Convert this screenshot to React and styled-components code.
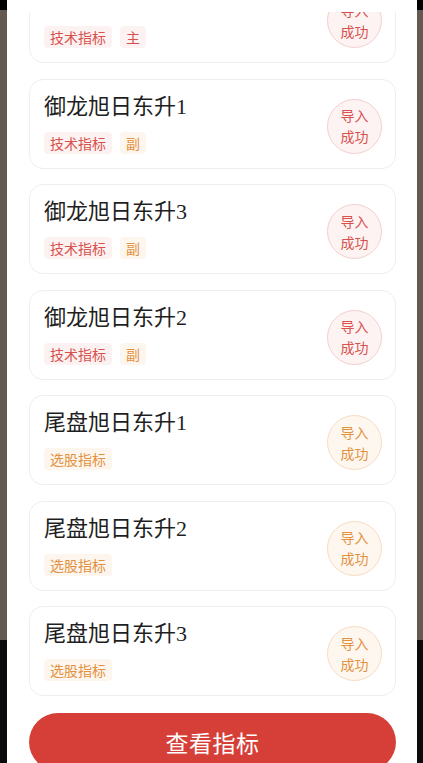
import React from 'react';
import styled, { createGlobalStyle } from 'styled-components';

const GlobalStyle = createGlobalStyle`
  html, body {
    margin: 0;
    padding: 0;
    height: 100%;
    overflow: hidden;
  }
  body {
    font-family: "Noto Sans CJK SC", "Noto Sans", sans-serif;
  }
  #root {
    height: 100%;
  }
`;

const tones = {
  red: { text: '#d8514c', bg: '#fdf2f2', ring: '#f3cfcf', fill: '#fdf3f3' },
  orange: { text: '#e4913f', bg: '#fdf6ee', ring: '#f7dcc1', fill: '#fef7ef' },
};

const Backdrop = styled.div`
  height: 763px;
  display: flex;
  padding: 0 6px 0 7px;
  box-sizing: border-box;
  background: linear-gradient(
    to bottom,
    #000 0,
    #000 10px,
    #645951 10px,
    #645951 640px,
    #0b0b0d 640px
  );
`;

const Sheet = styled.div`
  flex: 1;
  background: #fff;
  display: flex;
  flex-direction: column;
  padding: 12px 21px 0 22px;
  overflow: hidden;
`;

const ListWindow = styled.div`
  height: 689px;
  overflow: hidden;
  flex-shrink: 0;
`;

const List = styled.div`
  display: flex;
  flex-direction: column;
  gap: 15.5px;
  margin-top: -39px;
`;

const Card = styled.div`
  display: flex;
  align-items: center;
  justify-content: space-between;
  border: 1px solid #eeeeee;
  border-radius: 14px;
  padding: 12px 13px 14px 14px;
  background: #fff;
`;

const Info = styled.div`
  display: flex;
  flex-direction: column;
  gap: 10px;
`;

const Title = styled.div`
  font-family: "Liberation Serif", "Noto Sans CJK SC", serif;
  font-size: 22px;
  line-height: 30px;
  color: #1f1f1f;
`;

const Tags = styled.div`
  display: flex;
  gap: 8px;
`;

const Tag = styled.span`
  font-size: 14px;
  line-height: 16px;
  padding: 3px 6px;
  border-radius: 4px;
  color: ${p => tones[p.$tone].text};
  background: ${p => tones[p.$tone].bg};
`;

const Stamp = styled.div`
  width: 53px;
  height: 53px;
  border-radius: 50%;
  margin-top: 7px;
  display: flex;
  flex-direction: column;
  align-items: center;
  justify-content: center;
  font-size: 14px;
  line-height: 21px;
  color: ${p => tones[p.$tone].text};
  background: ${p => tones[p.$tone].fill};
  border: 1px solid ${p => tones[p.$tone].ring};
  flex-shrink: 0;
`;

const ViewButton = styled.button`
  margin-top: 12px;
  height: 58px;
  flex-shrink: 0;
  border: none;
  border-radius: 29px;
  background: #d63f38;
  color: #fff;
  font-family: "Noto Sans CJK SC", sans-serif;
  font-size: 23px;
  letter-spacing: 0.5px;
`;

const items = [
  { name: '御龙旭日东升', tags: [['技术指标', 'red'], ['主', 'red']], tone: 'red' },
  { name: '御龙旭日东升1', tags: [['技术指标', 'red'], ['副', 'orange']], tone: 'red' },
  { name: '御龙旭日东升3', tags: [['技术指标', 'red'], ['副', 'orange']], tone: 'red' },
  { name: '御龙旭日东升2', tags: [['技术指标', 'red'], ['副', 'orange']], tone: 'red' },
  { name: '尾盘旭日东升1', tags: [['选股指标', 'orange']], tone: 'orange' },
  { name: '尾盘旭日东升2', tags: [['选股指标', 'orange']], tone: 'orange' },
  { name: '尾盘旭日东升3', tags: [['选股指标', 'orange']], tone: 'orange' },
];

const App = () => {
  return (
    <>
      <GlobalStyle />
      <Backdrop>
        <Sheet>
          <ListWindow>
            <List>
              {items.map(item => (
                <Card key={item.name}>
                  <Info>
                    <Title>{item.name}</Title>
                    <Tags>
                      {item.tags.map(([label, tone]) => (
                        <Tag key={label} $tone={tone}>{label}</Tag>
                      ))}
                    </Tags>
                  </Info>
                  <Stamp $tone={item.tone}>
                    <span>导入</span>
                    <span>成功</span>
                  </Stamp>
                </Card>
              ))}
            </List>
          </ListWindow>
          <ViewButton>查看指标</ViewButton>
        </Sheet>
      </Backdrop>
    </>
  );
};

export default App;
